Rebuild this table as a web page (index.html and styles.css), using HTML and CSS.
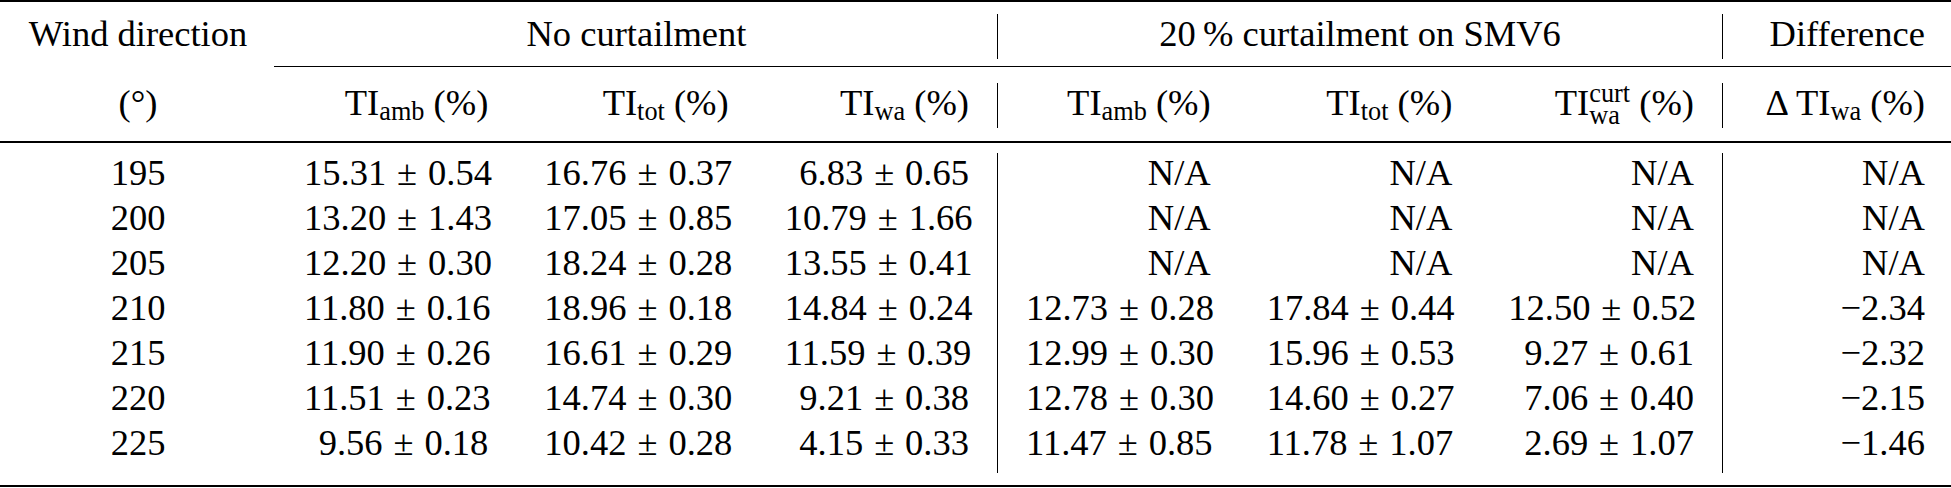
FILE: index.html
```html
<!DOCTYPE html>
<html lang="en">
<head>
<meta charset="utf-8">
<title>Turbulence intensity table</title>
<link rel="stylesheet" href="styles.css">
</head>
<body>
<div class="tbl">
  <div class="rule heavy top"></div>

  <div class="row head1">
    <div class="c ctr">Wind direction</div>
    <div class="c ctr span3">No curtailment</div>
    <div class="c ctr span3 sep">20&thinsp;% curtailment on SMV6</div>
    <div class="c ctr sep last">Difference</div>
  </div>

  <div class="cmid"></div>

  <div class="row head2">
    <div class="c ctr">(°)</div>
    <div class="c">TI<span class="sub">amb</span> (%)</div>
    <div class="c">TI<span class="sub">tot</span> (%)</div>
    <div class="c">TI<span class="sub">wa</span> (%)</div>
    <div class="c sep">TI<span class="sub">amb</span> (%)</div>
    <div class="c">TI<span class="sub">tot</span> (%)</div>
    <div class="c">TI<span class="stack"><span class="sup">curt</span><span class="sb">wa</span></span> (%)</div>
    <div class="c sep last">Δ TI<span class="sub">wa</span> (%)</div>
  </div>

  <div class="rule mid"></div>

  <div class="body">
    <div class="row">
      <div class="c ctr">195</div>
      <div class="c">15.31<span class="pm">±</span>0.54</div>
      <div class="c">16.76<span class="pm">±</span>0.37</div>
      <div class="c">6.83<span class="pm">±</span>0.65</div>
      <div class="c sep">N/A</div>
      <div class="c">N/A</div>
      <div class="c">N/A</div>
      <div class="c sep last">N/A</div>
    </div>
    <div class="row">
      <div class="c ctr">200</div>
      <div class="c">13.20<span class="pm">±</span>1.43</div>
      <div class="c">17.05<span class="pm">±</span>0.85</div>
      <div class="c">10.79<span class="pm">±</span>1.66</div>
      <div class="c sep">N/A</div>
      <div class="c">N/A</div>
      <div class="c">N/A</div>
      <div class="c sep last">N/A</div>
    </div>
    <div class="row">
      <div class="c ctr">205</div>
      <div class="c">12.20<span class="pm">±</span>0.30</div>
      <div class="c">18.24<span class="pm">±</span>0.28</div>
      <div class="c">13.55<span class="pm">±</span>0.41</div>
      <div class="c sep">N/A</div>
      <div class="c">N/A</div>
      <div class="c">N/A</div>
      <div class="c sep last">N/A</div>
    </div>
    <div class="row">
      <div class="c ctr">210</div>
      <div class="c">11.80<span class="pm">±</span>0.16</div>
      <div class="c">18.96<span class="pm">±</span>0.18</div>
      <div class="c">14.84<span class="pm">±</span>0.24</div>
      <div class="c sep">12.73<span class="pm">±</span>0.28</div>
      <div class="c">17.84<span class="pm">±</span>0.44</div>
      <div class="c">12.50<span class="pm">±</span>0.52</div>
      <div class="c sep last">−2.34</div>
    </div>
    <div class="row">
      <div class="c ctr">215</div>
      <div class="c">11.90<span class="pm">±</span>0.26</div>
      <div class="c">16.61<span class="pm">±</span>0.29</div>
      <div class="c">11.59<span class="pm">±</span>0.39</div>
      <div class="c sep">12.99<span class="pm">±</span>0.30</div>
      <div class="c">15.96<span class="pm">±</span>0.53</div>
      <div class="c">9.27<span class="pm">±</span>0.61</div>
      <div class="c sep last">−2.32</div>
    </div>
    <div class="row">
      <div class="c ctr">220</div>
      <div class="c">11.51<span class="pm">±</span>0.23</div>
      <div class="c">14.74<span class="pm">±</span>0.30</div>
      <div class="c">9.21<span class="pm">±</span>0.38</div>
      <div class="c sep">12.78<span class="pm">±</span>0.30</div>
      <div class="c">14.60<span class="pm">±</span>0.27</div>
      <div class="c">7.06<span class="pm">±</span>0.40</div>
      <div class="c sep last">−2.15</div>
    </div>
    <div class="row final">
      <div class="c ctr">225</div>
      <div class="c">9.56<span class="pm">±</span>0.18</div>
      <div class="c">10.42<span class="pm">±</span>0.28</div>
      <div class="c">4.15<span class="pm">±</span>0.33</div>
      <div class="c sep">11.47<span class="pm">±</span>0.85</div>
      <div class="c">11.78<span class="pm">±</span>1.07</div>
      <div class="c">2.69<span class="pm">±</span>1.07</div>
      <div class="c sep last">−1.46</div>
    </div>
  </div>

  <div class="rule heavy bottom"></div>
</div>
</body>
</html>
```

FILE: styles.css
```css
html, body {
  margin: 0;
  padding: 0;
  background: #ffffff;
}

body {
  width: 1951px;
  height: 488px;
  overflow: hidden;
  font-family: "Liberation Serif", "Times New Roman", serif;
  font-size: 36.5px;
  color: #000;
}

.tbl {
  width: 1951px;
  display: flex;
  flex-direction: column;
}

.rule {
  background: #000;
  width: 100%;
}

.rule.heavy {
  height: 2px;
}

.rule.top {
  margin-bottom: 12px;
}

.rule.mid {
  height: 2px;
  margin-top: 13px;
  margin-bottom: 10px;
}

.rule.bottom {
  margin-top: 12px;
}

.cmid {
  height: 1px;
  background: #000;
  margin: 7px 0 16px 274px;
}

.row {
  display: grid;
  grid-template-columns: 276px repeat(3, 240.33px) repeat(3, 241.67px) 229px;
  height: 45px;
}

.row.final {
  height: 50px;
}

.c {
  box-sizing: border-box;
  padding: 0 28px;
  line-height: 40px;
  text-align: right;
  white-space: nowrap;
}

.c.ctr {
  text-align: center;
}

.c.span3 {
  grid-column: span 3;
}

.c.sep {
  border-left: 1px solid #000;
}

.c.last {
  padding-right: 26px;
}

.head1 .c.last {
  text-align: right;
}

.sub {
  font-size: 0.72em;
  line-height: 0;
  vertical-align: -0.2em;
}

.stack {
  display: inline-flex;
  flex-direction: column;
  font-size: 0.72em;
  line-height: 20px;
  vertical-align: 13px;
  text-align: left;
}

.stack .sup,
.stack .sb {
  display: block;
  height: 20px;
}

.stack .sb {
  margin-top: 2px;
}

.pm {
  margin: 0 0.3em;
}
```
